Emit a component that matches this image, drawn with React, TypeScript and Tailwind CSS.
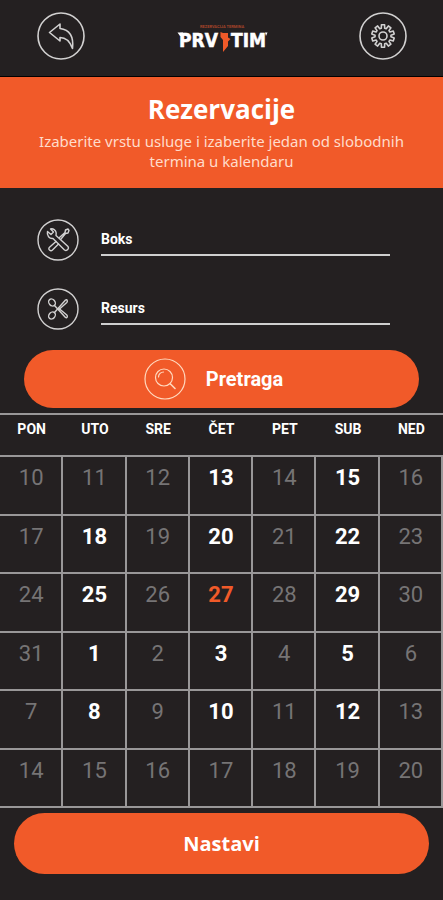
import { useState, FormEvent, ReactNode } from 'react';

const WEEK_DAYS = ['PON', 'UTO', 'SRE', 'ČET', 'PET', 'SUB', 'NED'];

type Day = { day: number; free?: boolean };

const d = (day: number): Day => ({ day });
const f = (day: number): Day => ({ day, free: true });

const WEEKS: Day[][] = [
    [d(10), d(11), d(12), f(13), d(14), f(15), d(16)],
    [d(17), f(18), d(19), f(20), d(21), f(22), d(23)],
    [d(24), f(25), d(26), f(27), d(28), f(29), d(30)],
    [d(31), f(1), d(2), f(3), d(4), f(5), d(6)],
    [d(7), f(8), d(9), f(10), d(11), f(12), d(13)],
    [d(14), d(15), d(16), d(17), d(18), d(19), d(20)],
];

function BackIcon() {
    return (
        <svg viewBox="0 0 48 48" className="size-12" fill="none" stroke="currentColor" strokeWidth="1.6" strokeLinejoin="round">
            <circle cx="24" cy="24" r="23" />
            <path d="M12.5 20.5 L23 12 V16.5 C31 17.5 37 23 35.5 36.5 C33 29.5 29 25.5 23 25.500 V29 Z" />
        </svg>
    );
}

function GearIcon() {
    const teeth = Array.from({ length: 10 }, (_, i) => {
        const point = (r: number, offset: number) => {
            const a = ((i * 36 + offset - 90) * Math.PI) / 180;
            return `${(24 + r * Math.cos(a)).toFixed(2)} ${(24 + r * Math.sin(a)).toFixed(2)}`;
        };
        return `${i ? 'L' : 'M'}${point(8, -12)} L${point(11.4, -8)} L${point(11.4, 8)} L${point(8, 12)}`;
    }).join(' ');

    return (
        <svg viewBox="0 0 48 48" className="size-12" fill="none" stroke="currentColor" strokeWidth="1.6" strokeLinejoin="round">
            <circle cx="24" cy="24" r="23" />
            <path d={`${teeth} Z`} />
            <circle cx="24" cy="24" r="4" />
        </svg>
    );
}

function ToolsIcon() {
    return (
        <svg viewBox="0 0 42 42" className="size-[42px]" fill="none" stroke="currentColor" strokeWidth="1.4" strokeLinejoin="round" strokeLinecap="round">
            <circle cx="21" cy="21" r="20" />
            {/* wrench */}
            <path d="M10.5 12.5 L14 15.5 L16.5 13 L13.5 10 C16 9.2 19 11 19.2 14 L19 16.5 L31 27.5 C32.5 29.5 30 32.5 27.5 31 L16 19.5 C12.5 20 9.5 16.5 10.5 12.5 Z" />
            {/* screwdriver */}
            <path d="M22.5 18.500 L28 13.5 L28.5 11 L31 10 L32 11.5 L31 14 L28.5 14.5 L24 20" />
            <path d="M19 22.5 L12.5 28.2 C10.5 30 13.5 33 15.5 31 L21.5 25" />
        </svg>
    );
}

function ScissorsIcon() {
    return (
        <svg viewBox="0 0 42 42" className="size-[42px]" fill="none" stroke="currentColor" strokeWidth="1.4" strokeLinejoin="round" strokeLinecap="round">
            <circle cx="21" cy="21" r="20" />
            <ellipse cx="15" cy="14.5" rx="3" ry="3.800" transform="rotate(-40 15 14.5)" />
            <ellipse cx="15" cy="27.5" rx="3" ry="3.800" transform="rotate(40 15 27.5)" />
            <path d="M17.500 17.500 L28.500 29.500 C30 30.500 31 28.500 29.800 27 L22 20.500" />
            <path d="M17.500 24.500 L28.500 12 C30 11 31 13 29.800 14.500 L22 21.500" />
        </svg>
    );
}

function SearchIcon() {
    return (
        <svg viewBox="0 0 42 42" className="size-[42px]" fill="none" stroke="currentColor" strokeWidth="1.2" strokeLinecap="round">
            <circle cx="21" cy="21" r="20" />
            <circle cx="20" cy="19.5" r="8.5" />
            <path d="M26.5 26 L31 30.5" strokeWidth="1.6" />
            <path d="M14.5 19 C14.5 16 17 14 19.5 14" />
        </svg>
    );
}

function Logo() {
    return (
        <svg viewBox="0 0 96 32" className="h-8 w-24" role="img" aria-label="Prvi tim">
            <text x="48" y="8" textAnchor="middle" fontSize="4" fontWeight="700" fill="#a8452a" className="font-['Roboto',sans-serif]">
                REZERVACIJA TERMINA
            </text>
            <g
                fill="#ffffff"
                stroke="#ffffff"
                strokeWidth="0.5"
                fontSize="19"
                fontWeight="700"
                className="font-['DejaVu_Sans_Condensed','Open_Sans',sans-serif]"
            >
                <text x="5" y="27">PRV</text>
                <text x="57" y="27">TIM</text>
            </g>
            {/* serif spikes on the outer letters */}
            <path d="M3.500 12.500 H9 V16 H6 Z M91 12.500 H93.500 L92 16 Z" fill="#ffffff" />
            <path d="M46.500 12 L49 13 H54 V17.500 L56.500 19 L54 21.500 V26 L49 32 V20 L46.500 17 Z" fill="#f15a29" />
        </svg>
    );
}

type FieldProps = {
    id: string;
    label: string;
    icon: ReactNode;
    value: string;
    onChange: (value: string) => void;
};

function Field({ id, label, icon, value, onChange }: FieldProps) {
    return (
        <div className="flex items-center gap-[22px]">
            <label htmlFor={id} aria-label={label} className="shrink-0 text-[#d2d1d1]">
                {icon}
            </label>
            <input
                id={id}
                type="text"
                value={value}
                placeholder={label}
                onChange={(e) => onChange(e.target.value)}
                className="h-8 min-w-0 flex-1 border-b-2 border-[#cfcfcf] bg-transparent pt-1 pb-1 text-sm leading-5 font-bold text-white placeholder:text-white focus:outline-none"
            />
        </div>
    );
}

export default function App() {
    const [box, setBox] = useState('');
    const [resource, setResource] = useState('');
    const [selected, setSelected] = useState('2-3');

    const handleSearch = (e: FormEvent) => {
        e.preventDefault();
    };

    return (
        <div className="flex min-h-screen w-full flex-col bg-[#242021] font-['Roboto',sans-serif] text-white">
            <header className="flex h-[77px] items-center justify-between border-b border-black pr-9 pb-1 pl-[37px]">
                <button type="button" aria-label="Nazad" className="text-[#d2d1d1]">
                    <BackIcon />
                </button>
                <Logo />
                <button type="button" aria-label="Podešavanja" className="text-[#d2d1d1]">
                    <GearIcon />
                </button>
            </header>

            <section className="bg-[#f15a29] px-7 pt-[14px] pb-[17px] text-center font-['Noto_Sans',sans-serif]">
                <h1 className="font-['Open_Sans',sans-serif] text-[26px] leading-9 font-bold">Rezervacije</h1>
                <p className="mt-1 text-[15px] leading-5 text-[#ffdccb]">
                    Izaberite vrstu usluge i izaberite jedan od slobodnih termina u kalendaru
                </p>
            </section>

            <form onSubmit={handleSearch} className="px-6 pt-[31px] pb-[5px]">
                <div className="flex flex-col gap-[27px] pr-[29px] pl-[13px]">
                    <Field id="box" label="Boks" icon={<ToolsIcon />} value={box} onChange={setBox} />
                    <Field id="resource" label="Resurs" icon={<ScissorsIcon />} value={resource} onChange={setResource} />
                </div>
                <button
                    type="submit"
                    className="mt-5 flex h-[58px] w-full items-center justify-center gap-5 rounded-full bg-[#f15a29] pr-4 text-xl font-bold"
                >
                    <span className="text-[#ffd9bf]">
                        <SearchIcon />
                    </span>
                    Pretraga
                </button>
            </form>

            <table className="w-full table-fixed border-separate border-spacing-0 border-t-2 border-[#999798]">
                <thead>
                    <tr>
                        {WEEK_DAYS.map((name) => (
                            <th key={name} scope="col" className="h-[42px] border-b-2 border-[#999798] pt-1 align-top text-sm font-bold">
                                {name}
                            </th>
                        ))}
                    </tr>
                </thead>
                <tbody>
                    {WEEKS.map((week, row) => (
                        <tr key={row} className="odd:h-[59px] even:h-[58px]">
                            {week.map(({ day, free }, col) => {
                                const key = `${row}-${col}`;
                                const color = key === selected ? 'text-[#f15a29]' : free ? 'text-white' : 'text-[#767475]';
                                return (
                                    <td key={col} className="border-r-2 border-b-2 border-[#999798] p-0 align-top">
                                        <button
                                            type="button"
                                            disabled={!free}
                                            onClick={() => setSelected(key)}
                                            className={`block w-full pt-[9px] pb-2 pl-px text-[22px] leading-6 ${free ? 'font-bold' : 'font-normal'} ${color}`}
                                        >
                                            {day}
                                        </button>
                                    </td>
                                );
                            })}
                        </tr>
                    ))}
                </tbody>
            </table>

            <div className="px-[14px] pt-[5px] pb-6">
                <button
                    type="button"
                    className="h-[61px] w-full rounded-full bg-[#f15a29] font-['Open_Sans',sans-serif] text-xl font-bold"
                >
                    Nastavi
                </button>
            </div>
        </div>
    );
}
